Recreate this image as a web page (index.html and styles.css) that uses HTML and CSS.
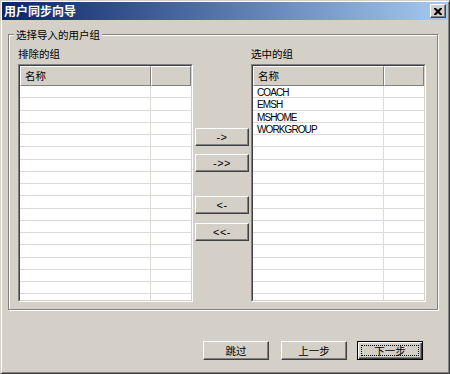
FILE: index.html
```html
<!DOCTYPE html>
<html lang="zh-CN">
<head>
<meta charset="utf-8">
<title>用户同步向导</title>
<link rel="stylesheet" href="styles.css">
</head>
<body>
<div class="window">
  <div class="titlebar">
    <span class="title">用户同步向导</span>
    <button class="close" aria-label="关闭">
      <svg width="8" height="7" viewBox="0 0 8 7"><path d="M0 0h2l2 2 2-2h2v1l-2.5 2.5L8 6v1H6L4 5 2 7H0V6l2.5-2.5L0 1z" fill="#000"/></svg>
    </button>
  </div>
  <div class="group">
    <div class="legend">选择导入的用户组</div>
    <div class="columns">
      <div class="col">
        <div class="label">排除的组</div>
        <div class="list"><div class="list-in">
          <div class="hdr"><div class="h1">名称</div><div class="h2"></div></div>
          <div class="row"><div class="c1"></div><div class="c2"></div></div>
          <div class="row"><div class="c1"></div><div class="c2"></div></div>
          <div class="row"><div class="c1"></div><div class="c2"></div></div>
          <div class="row"><div class="c1"></div><div class="c2"></div></div>
          <div class="row"><div class="c1"></div><div class="c2"></div></div>
          <div class="row"><div class="c1"></div><div class="c2"></div></div>
          <div class="row"><div class="c1"></div><div class="c2"></div></div>
          <div class="row"><div class="c1"></div><div class="c2"></div></div>
          <div class="row"><div class="c1"></div><div class="c2"></div></div>
          <div class="row"><div class="c1"></div><div class="c2"></div></div>
          <div class="row"><div class="c1"></div><div class="c2"></div></div>
          <div class="row"><div class="c1"></div><div class="c2"></div></div>
          <div class="row"><div class="c1"></div><div class="c2"></div></div>
          <div class="row"><div class="c1"></div><div class="c2"></div></div>
          <div class="row"><div class="c1"></div><div class="c2"></div></div>
          <div class="row"><div class="c1"></div><div class="c2"></div></div>
          <div class="row"><div class="c1"></div><div class="c2"></div></div>
          <div class="row"><div class="c1"></div><div class="c2"></div></div>
        </div></div>
      </div>
      <div class="mid">
        <button class="btn arrow b1">-&gt;</button>
        <button class="btn arrow b2">-&gt;&gt;</button>
        <button class="btn arrow b3">&lt;-</button>
        <button class="btn arrow b4">&lt;&lt;-</button>
      </div>
      <div class="col">
        <div class="label">选中的组</div>
        <div class="list"><div class="list-in">
          <div class="hdr"><div class="h1">名称</div><div class="h2"></div></div>
          <div class="row"><div class="c1">COACH</div><div class="c2"></div></div>
          <div class="row"><div class="c1">EMSH</div><div class="c2"></div></div>
          <div class="row"><div class="c1">MSHOME</div><div class="c2"></div></div>
          <div class="row"><div class="c1">WORKGROUP</div><div class="c2"></div></div>
          <div class="row"><div class="c1"></div><div class="c2"></div></div>
          <div class="row"><div class="c1"></div><div class="c2"></div></div>
          <div class="row"><div class="c1"></div><div class="c2"></div></div>
          <div class="row"><div class="c1"></div><div class="c2"></div></div>
          <div class="row"><div class="c1"></div><div class="c2"></div></div>
          <div class="row"><div class="c1"></div><div class="c2"></div></div>
          <div class="row"><div class="c1"></div><div class="c2"></div></div>
          <div class="row"><div class="c1"></div><div class="c2"></div></div>
          <div class="row"><div class="c1"></div><div class="c2"></div></div>
          <div class="row"><div class="c1"></div><div class="c2"></div></div>
          <div class="row"><div class="c1"></div><div class="c2"></div></div>
          <div class="row"><div class="c1"></div><div class="c2"></div></div>
          <div class="row"><div class="c1"></div><div class="c2"></div></div>
          <div class="row"><div class="c1"></div><div class="c2"></div></div>
        </div></div>
      </div>
    </div>
  </div>
  <div class="footer">
    <button class="btn wide">跳过</button>
    <button class="btn wide prev">上一步</button>
    <button class="btn wide default next"><span class="focus">下一步</span></button>
  </div>
</div>
</body>
</html>
```
FILE: styles.css
```css
* { box-sizing: border-box; }
html, body { margin: 0; padding: 0; background: #d4d0c8; }
body {
  font-family: "Noto Sans CJK SC", "Liberation Sans", sans-serif;
  font-size: 10.5px;
  color: #000;
}
.window {
  width: 450px;
  height: 374px;
  background: #d4d0c8;
  border: 1px solid;
  border-color: #d4d0c8 #404040 #404040 #d4d0c8;
  box-shadow: inset 1px 1px #fff, inset -1px -1px #808080;
  padding: 1px;
  display: flex;
  flex-direction: column;
}
.titlebar {
  height: 18px;
  display: flex;
  align-items: center;
  background: linear-gradient(to right, #0a246a, #a6caf0);
  padding: 0 2px 0 2px;
}
.title {
  flex: 1;
  color: #fff;
  font-weight: bold;
  font-size: 12px;
  line-height: 14px;
}
.close {
  width: 16px;
  height: 14px;
  padding: 0;
  margin: 0;
  background: #d4d0c8;
  border: 1px solid;
  border-color: #fff #404040 #404040 #fff;
  box-shadow: inset -1px -1px #808080;
  display: flex;
  align-items: center;
  justify-content: center;
}
.close svg { display: block; margin-left: -1px; }
.group {
  position: relative;
  margin: 14px 0 0 6px;
  width: 430px;
  border: 1px solid #808080;
  box-shadow: inset 1px 1px #fff, 1px 1px #fff;
  padding: 13px 0 7px 9px;
}
.legend {
  position: absolute;
  top: -7px;
  left: 5px;
  padding: 0 2px;
  background: #d4d0c8;
  line-height: 13px;
}
.columns {
  display: flex;
  gap: 2px;
}
.col {
  width: 175px;
  display: flex;
  flex-direction: column;
}
.label {
  line-height: 12px;
  height: 12px;
  margin-bottom: 4px;
}
.list {
  height: 238px;
  border: 1px solid;
  border-color: #808080 #fff #fff #808080;
}
.list-in {
  height: 100%;
  border: 1px solid;
  border-color: #404040 #d4d0c8 #d4d0c8 #404040;
  background: #fff;
  overflow: hidden;
}
.hdr {
  display: flex;
  height: 20px;
  background: #d4d0c8;
}
.h1, .h2 {
  height: 20px;
  border: 1px solid;
  border-color: #fff #808080 #808080 #fff;
  box-shadow: inset 0 -1px #d4d0c8;
  line-height: 17px;
  padding-left: 4px;
}
.h1 { width: 131px; }
.h2 { flex: 1; }
.row {
  display: flex;
  height: 12.25px;
  border-bottom: 1px solid #dcdad4;
}
.c1 {
  width: 131px;
  border-right: 1px solid #dcdad4;
  padding-left: 4px;
  font-family: "Liberation Sans", sans-serif;
  font-size: 10px;
  letter-spacing: -0.9px;
  line-height: 13px;
}
.c2 { flex: 1; }
.mid {
  width: 54px;
  display: flex;
  flex-direction: column;
  padding-top: 80px;
}
.btn {
  margin: 0;
  padding: 0;
  background: #d4d0c8;
  border: 1px solid;
  border-color: #fff #404040 #404040 #fff;
  box-shadow: inset -1px -1px #808080;
  color: #000;
  display: flex;
  align-items: center;
  justify-content: center;
}
.arrow {
  width: 54px;
  height: 18px;
  font-family: "Liberation Sans", sans-serif;
  font-size: 11px;
  letter-spacing: 0.5px;
}
.b2 { margin-top: 8px; }
.b3 { margin-top: 24px; }
.b4 { margin-top: 9px; }
.footer {
  display: flex;
  justify-content: flex-end;
  margin-top: 31px;
  padding-right: 25px;
}
.wide {
  width: 66px;
  height: 19px;
  font-family: "Noto Sans CJK SC", sans-serif;
  font-size: 10.5px;
}
.prev { margin-left: 12px; }
.next { margin-left: 10px; }
.default {
  border: 1px solid #000;
  box-shadow: inset 1px 1px #fff, inset -1px -1px #404040, inset -2px -2px #808080;
  padding: 3px;
}
.focus {
  flex: 1;
  align-self: stretch;
  border: 1px dotted #000;
  display: flex;
  align-items: center;
  justify-content: center;
  line-height: 10px;
}
```
